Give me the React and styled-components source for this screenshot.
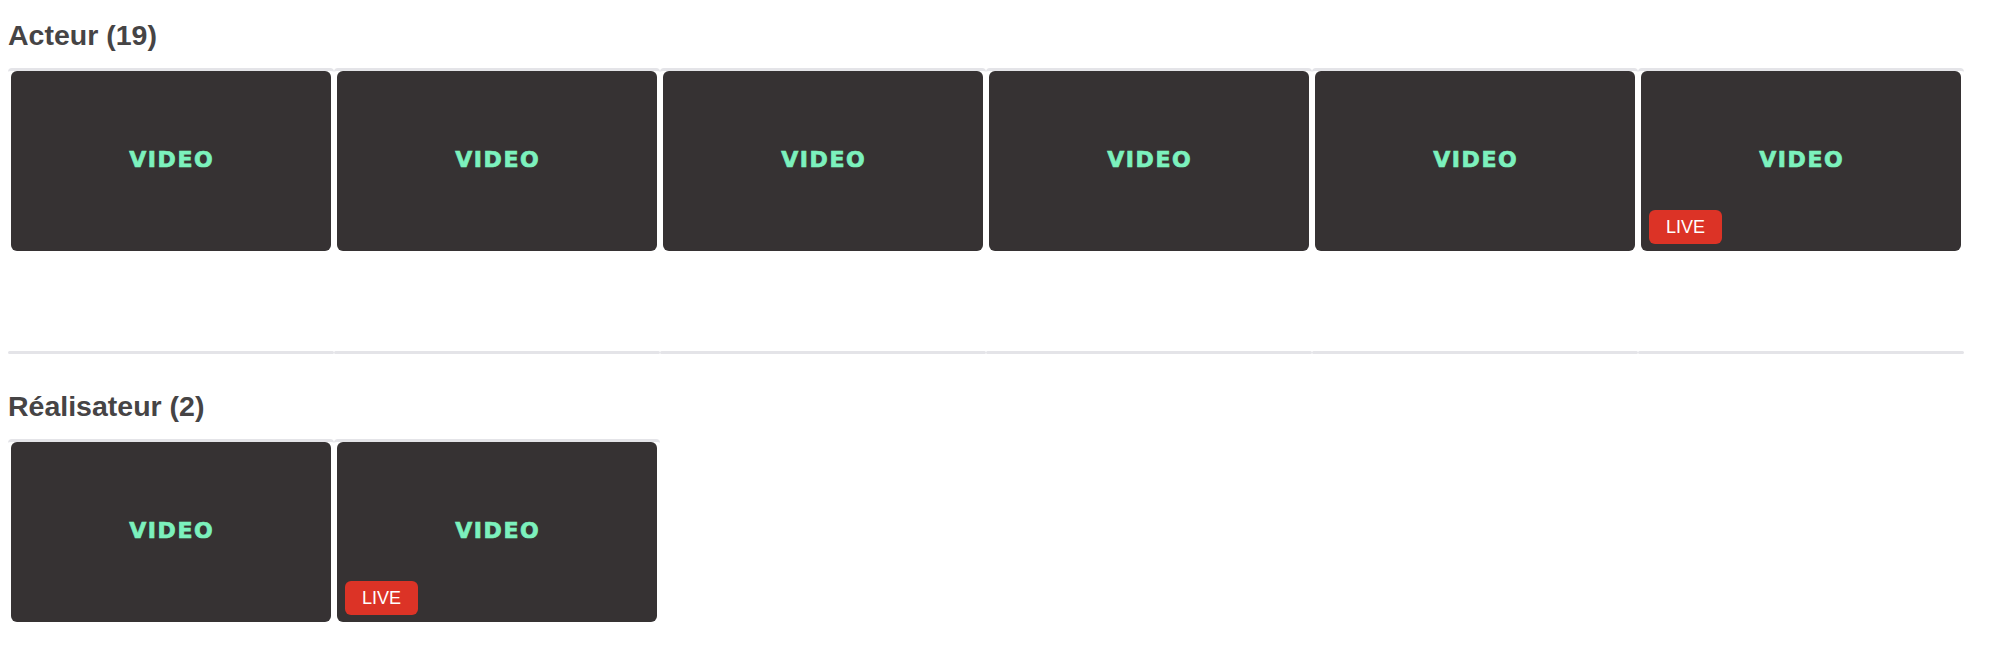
import React from 'react'
import styled, { createGlobalStyle } from 'styled-components'

const GlobalStyle = createGlobalStyle`
  body {
    margin: 0;
    background: #ffffff;
    font-family: "Liberation Sans", Arial, sans-serif;
  }
`

const sections = [
  {
    title: 'Acteur (19)',
    rows: [
      [{}, {}, {}, {}, {}, { live: true }],
      null,
    ],
  },
  {
    title: 'Réalisateur (2)',
    rows: [[{}, { live: true }]],
  },
]

function App() {
  return (
    <Page>
      <GlobalStyle />
      {sections.map((section) => (
        <Section key={section.title}>
          <Heading>{section.title}</Heading>
          {section.rows.map((row, r) => (
            <Row key={r}>
              {row
                ? row.map((item, i) => (
                    <Cell key={i} $filled>
                      <Card>
                        <Label>VIDEO</Label>
                        {item.live && <LiveBadge>LIVE</LiveBadge>}
                      </Card>
                    </Cell>
                  ))
                : Array.from({ length: 6 }).map((_, i) => <Cell key={i} />)}
            </Row>
          ))}
        </Section>
      ))}
    </Page>
  )
}

const Page = styled.div`
  padding: 8px 8px 0 8px;
`

const Section = styled.section`
  padding-top: 10px;
  margin-bottom: 25px;

  &:last-child {
    margin-bottom: 0;
  }
`

const Heading = styled.h2`
  margin: 0 0 16px 0;
  font-size: 28.5px;
  line-height: 34px;
  font-weight: 700;
  color: #464445;
`

const Row = styled.div`
  display: grid;
  grid-template-columns: repeat(6, 326px);
`

const Cell = styled.div`
  border-top: 3px solid #e4e4e8;
  border-radius: 4px;
  padding: 0 3px;
  min-height: ${(p) => (p.$filled ? '280px' : '0')};
`

const Card = styled.div`
  position: relative;
  width: 320px;
  height: 180px;
  background: #363233;
  border-radius: 6px;
  display: flex;
  align-items: center;
  justify-content: center;
`

const Label = styled.span`
  font-family: "DejaVu Sans", Verdana, sans-serif;
  font-weight: 700;
  font-size: 22px;
  letter-spacing: 1.6px;
  padding-left: 1.6px;
  color: #7cf1bd;
  -webkit-text-stroke: 0.7px #7cf1bd;
  margin-top: -4px;
`

const LiveBadge = styled.span`
  position: absolute;
  left: 8px;
  bottom: 7px;
  height: 34px;
  padding: 0 17px;
  border-radius: 6px;
  background: #dc3326;
  color: #ffffff;
  font-family: "Liberation Sans", Arial, sans-serif;
  font-size: 18px;
  line-height: 34px;
`

export default App
